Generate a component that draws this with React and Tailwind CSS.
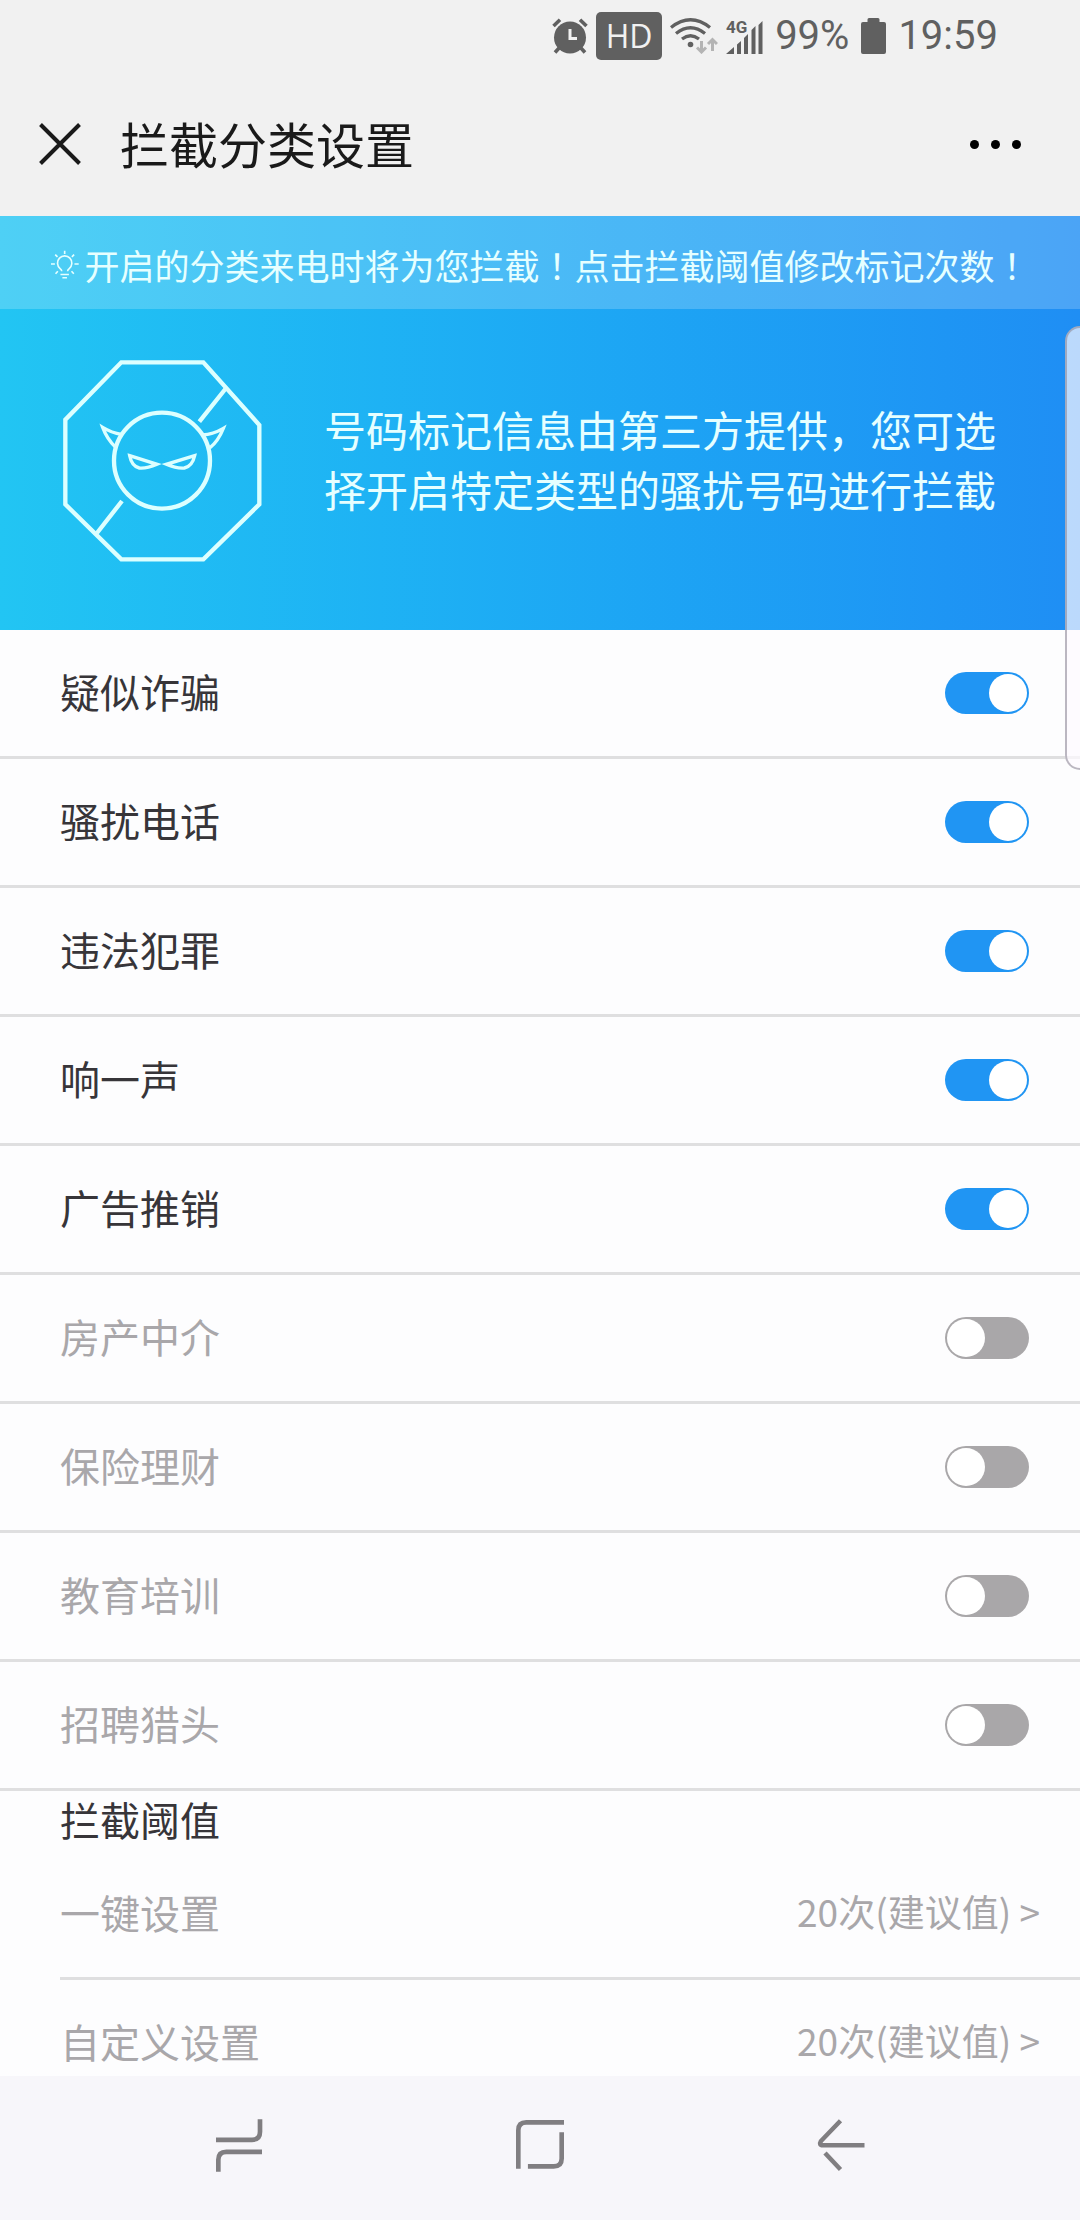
import React, { useState } from "react";

const initialCategories = [
  { id: "fraud", label: "疑似诈骗", enabled: true },
  { id: "harassment", label: "骚扰电话", enabled: true },
  { id: "crime", label: "违法犯罪", enabled: true },
  { id: "one-ring", label: "响一声", enabled: true },
  { id: "ads", label: "广告推销", enabled: true },
  { id: "estate", label: "房产中介", enabled: false },
  { id: "insurance", label: "保险理财", enabled: false },
  { id: "education", label: "教育培训", enabled: false },
  { id: "recruiting", label: "招聘猎头", enabled: false },
];

const thresholds = [
  { id: "all", label: "一键设置", value: "20次(建议值)" },
  { id: "custom", label: "自定义设置", value: "20次(建议值)" },
];

// Centred full-width punctuation
const Punct = ({ children }) => (
  <span lang="zh-TW" className="font-['Noto_Sans_CJK_TC',sans-serif]">
    {children}
  </span>
);

const AlarmIcon = () => (
  <svg viewBox="0 0 36 36" className="size-9" aria-hidden="true">
    <circle cx="18" cy="19.5" r="16" fill="#606060" />
    <path
      d="M1.500 8 L8 1.800 M34.500 8 L28 1.800 M3 34.500 L8 29 M33 34.500 L28 29"
      stroke="#606060"
      strokeWidth="3.600"
      fill="none"
    />
    <path d="M18 11 V20.500 H25" stroke="#f1f1f1" strokeWidth="3" fill="none" />
  </svg>
);

const WifiIcon = () => (
  <svg viewBox="0 0 48 36" className="h-9 w-12" aria-hidden="true">
    <g fill="none" stroke="#606060" strokeWidth="3.300">
      <path d="M1 9.500 Q20.500 -6 40 9.500" />
      <path d="M6 15.500 Q20.500 4 35 15.500" />
      <path d="M12 21 Q20.500 14.500 29 21" />
    </g>
    <circle cx="20.500" cy="26.500" r="2.800" fill="#606060" />
    <g fill="none" stroke="#b4b4b4" strokeWidth="3">
      <path d="M31.500 23 V34 M27 29.500 L31.500 34 L36 29.500" />
      <path d="M42.500 33 V22 M38 26 L42.500 21.500 L47 26" />
    </g>
  </svg>
);

const SignalIcon = () => (
  <svg viewBox="0 0 37 36" className="h-9 w-[37px]" aria-hidden="true">
    <path
      d="M0 36 L8 29 V36Z M11 36 V26.500 L15 23 V36Z M18 36 V20 L22 16 V36Z M25.500 36 V12 L29.500 8 V36Z M32.500 36 V7 L36.500 3 V36Z"
      fill="#606060"
    />
    <text
      x="0"
      y="15"
      fontFamily="Roboto, sans-serif"
      fontSize="17"
      fontWeight="700"
      fill="#606060"
    >
      4G
    </text>
  </svg>
);

const BatteryIcon = () => (
  <svg viewBox="0 0 25 36" className="h-9 w-[25px]" aria-hidden="true">
    <path
      d="M2 4 H6.500 V1.500 Q6.500 0 8 0 H17 Q18.500 0 18.500 1.500 V4 H23 Q25 4 25 6 V34 Q25 36 23 36 H2 Q0 36 0 34 V6 Q0 4 2 4Z"
      fill="#606060"
    />
  </svg>
);

const BulbIcon = () => (
  <svg
    viewBox="30 45 92 92"
    className="size-[30px]"
    fill="none"
    stroke="#e6ffff"
    strokeWidth="5"
    aria-hidden="true"
  >
    <path d="M66 110 Q66 106 61 102 A22 22 0 1 1 89 102 Q84 106 84 110" />
    <path d="M62 120 H88 M68 130 H82" />
    <path d="M75 47 V57 M46 59 L53 66 M104 59 L97 66 M33 88 H45 M105 88 H118 M47 118 L54 110 M103 118 L96 110" />
  </svg>
);

const DevilIcon = () => (
  <svg
    viewBox="95 86 600 609"
    className="h-[203px] w-[200px] shrink-0"
    fill="none"
    stroke="#dcffff"
    strokeWidth="13"
    aria-hidden="true"
  >
    <path d="M273 96 H519 L687 284 V522 L519 687 H273 L105 522 V268Z" />
    <path d="M585 176 L507 274 M200 608 L275 512" />
    <circle cx="395" cy="391" r="144" />
    <g strokeWidth="10">
      <path d="M273 312 Q245 308 217 291 Q230 326 256 351" />
      <path d="M516 314 Q548 312 579 294 Q564 332 538 353" />
      <path d="M298 376 L380 402 Q349 415 327 413 Q304 408 298 376Z" />
      <path d="M493 376 L408 402 Q439 415 462 413 Q486 408 493 376Z" />
    </g>
  </svg>
);

const Switch = ({ checked, onChange, id }) => (
  <span className="relative inline-flex h-[42px] w-[84px]">
    <input
      id={id}
      type="checkbox"
      role="switch"
      checked={checked}
      onChange={onChange}
      className="peer h-full w-full cursor-pointer appearance-none rounded-full bg-[#a9a7a9] checked:bg-[#2095f3]"
    />
    <span className="pointer-events-none absolute top-[2px] left-[2px] size-[38px] rounded-full bg-white peer-checked:right-[2px] peer-checked:left-auto" />
  </span>
);

const StatusBar = () => (
  <div className="flex h-[72px] shrink-0 items-center justify-end gap-3 pr-[82px] font-[Roboto,sans-serif] text-[40px] leading-none text-[#606060]">
    <div className="flex items-center gap-2">
      <AlarmIcon />
      <span className="flex h-12 w-[66px] items-center justify-center rounded-[5px] bg-[#606060] font-['Open_Sans',sans-serif] text-[32px] text-[#f1f1f1]">
        HD
      </span>
      <WifiIcon />
      <SignalIcon />
    </div>
    <span>99%</span>
    <BatteryIcon />
    <span>19:59</span>
  </div>
);

const NavBar = () => (
  <nav className="flex h-36 shrink-0 items-center bg-[#f7f6fa] px-[88px] pb-1.5">
    <button type="button" aria-label="最近" className="flex flex-1 justify-center">
      <svg viewBox="42 52 144 164" className="h-[55px] w-12" fill="none" stroke="#807e81" strokeWidth="14">
        <path d="M45 117 H153 Q177 117 177 93 V55" />
        <path d="M52 213 V177 Q52 153 76 153 H183" />
      </svg>
    </button>
    <button type="button" aria-label="主页" className="flex flex-1 justify-center">
      <svg viewBox="945 56 145 164" className="h-[55px] w-12" fill="none" stroke="#807e81" strokeWidth="14">
        <path d="M952 208 V92 Q952 68 976 68 H1090" />
        <path d="M1083 98 V177 Q1083 201 1059 201 H981" />
      </svg>
    </button>
    <button type="button" aria-label="后退" className="flex flex-1 justify-center">
      <svg viewBox="-1 -1 48 55" className="h-[55px] w-12" fill="none" stroke="#807e81" strokeWidth="4.500">
        <path d="M22.500 1.700 L3 22 Q0.500 26.300 5 26.300 H46.500" />
        <path d="M7 34 L22.500 50.500" />
      </svg>
    </button>
  </nav>
);

const App = () => {
  const [categories, setCategories] = useState(initialCategories);

  const toggleCategory = (id) => {
    setCategories(
      categories.map((c) => (c.id === id ? { ...c, enabled: !c.enabled } : c))
    );
  };

  return (
    <div
      lang="zh-CN"
      className="relative flex h-screen flex-col overflow-hidden bg-[#fdfdfe] font-['Noto_Sans_CJK_SC',sans-serif]"
    >
      <div className="shrink-0 bg-[#f1f1f1]">
        <StatusBar />
        <header className="flex h-36 items-center pr-[59px] pl-[39px]">
          <button type="button" aria-label="关闭">
            <svg viewBox="0 0 42 42" className="size-[42px]" stroke="#1a1a1a" strokeWidth="4">
              <path d="M1.500 1.500 L40.500 40.500 M40.500 1.500 L1.500 40.500" />
            </svg>
          </button>
          <h1 className="ml-[39px] flex-1 pb-1 text-[49px] leading-none text-[#1a1a1a]">
            拦截分类设置
          </h1>
          <button type="button" aria-label="更多" className="flex gap-3">
            <span className="size-[9px] rounded-full bg-black" />
            <span className="size-[9px] rounded-full bg-black" />
            <span className="size-[9px] rounded-full bg-black" />
          </button>
        </header>
      </div>

      <main className="min-h-0 flex-1 overflow-y-auto [scrollbar-width:none]">
        <section className="bg-linear-to-r from-[#22c5f3] to-[#1f8ef4]">
          <div className="flex h-[93px] items-center justify-center gap-1 bg-white/20 pt-1 whitespace-nowrap text-[#e6ffff]">
            <BulbIcon />
            <p className="text-[35px] leading-none">
              开启的分类来电时将为您拦截<Punct>！</Punct>点击拦截阈值修改标记次数
              <Punct>！</Punct>
            </p>
          </div>
          <div className="flex items-center gap-[62px] pt-[50px] pr-20 pb-[68px] pl-[62px]">
            <DevilIcon />
            <p className="pb-1 text-[42px] leading-[60px] text-[#e6ffff]">
              号码标记信息由第三方提供，您可选择开启特定类型的骚扰号码进行拦截
            </p>
          </div>
        </section>

        <ul>
          {categories.map((category) => (
            <li
              key={category.id}
              className="flex h-[129px] items-center justify-between border-b-3 border-[#dfdfe0] pr-[51px] pl-[60px]"
            >
              <label
                htmlFor={category.id}
                className={
                  category.enabled
                    ? "pb-1 text-[40px] text-[#373539]"
                    : "pb-1 text-[40px] text-[#a9a7aa]"
                }
              >
                {category.label}
              </label>
              <Switch
                id={category.id}
                checked={category.enabled}
                onChange={() => toggleCategory(category.id)}
              />
            </li>
          ))}
        </ul>

        <section className="pl-[60px]">
          <h2 className="pb-1 text-[40px] leading-[56px] text-[#373539]">
            拦截阈值
          </h2>
          {thresholds.map((item) => (
            <button
              key={item.id}
              type="button"
              className="flex h-[129px] w-full items-center justify-between border-b-3 border-[#dfdfe0] pr-10 pb-1 text-[#a9a7aa]"
            >
              <span className="text-[40px]">{item.label}</span>
              <span className="text-[37px]">{item.value} &gt;</span>
            </button>
          ))}
        </section>
      </main>

      {/* Edge panel handle */}
      <div className="absolute top-[326px] right-0 h-[444px] w-[15px] rounded-l-2xl border-2 border-r-0 border-[#8f8a98]/60 bg-[#fdfaff]/70" />

      <NavBar />
    </div>
  );
};

export default App;
